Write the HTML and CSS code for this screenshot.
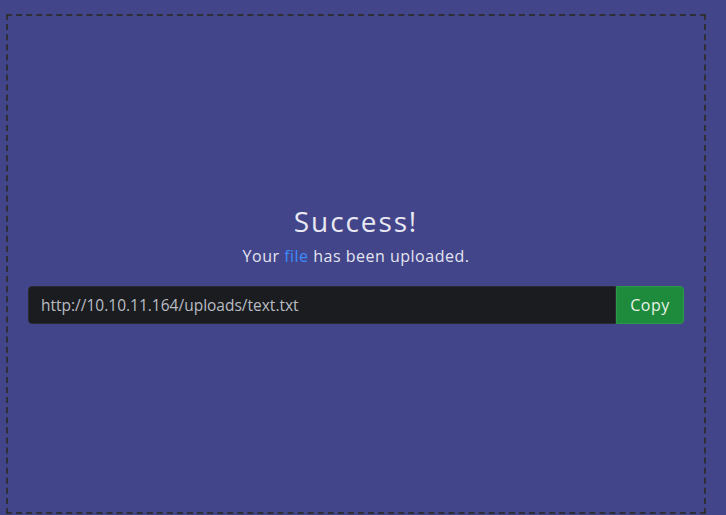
FILE: index.html
```html
<!DOCTYPE html>
<html lang="en">
<head>
<meta charset="utf-8">
<title>Upload</title>
<link rel="stylesheet" href="styles.css">
</head>
<body>
<div class="dropzone">
  <div class="result">
    <h1 class="title">Success!</h1>
    <p class="message">Your <a class="link" href="#">file</a> has been uploaded.</p>
    <div class="copy-group">
      <input class="url" type="text" value="http://10.10.11.164/uploads/text.txt" readonly>
      <button class="copy-btn" type="button">Copy</button>
    </div>
  </div>
</div>
</body>
</html>
```

FILE: styles.css
```css
html, body {
  background: #424589;
}
body {
  margin: 14px 20px 0 6px;
  font-family: "Open Sans", "Liberation Sans", sans-serif;
  color: #e4e4f0;
}
.dropzone {
  box-sizing: border-box;
  width: 700px;
  height: 500px;
  border: 2px dashed #2f2f38;
  padding: 0 20px;
  display: flex;
  align-items: center;
}
.result {
  width: 100%;
  display: flex;
  flex-direction: column;
  align-items: center;
  margin-top: 0;
}
.title {
  margin: 0;
  font-size: 28px;
  font-weight: 400;
  line-height: 32px;
  letter-spacing: 1.9px;
  color: #e8e8f2;
}
.message {
  margin: 8px 0 0;
  font-size: 16px;
  line-height: 22px;
  letter-spacing: 0.5px;
  color: #e4e4f0;
}
.link {
  color: #3d8bfd;
  text-decoration: none;
}
.copy-group {
  display: flex;
  width: 100%;
  margin-top: 19px;
}
.url {
  flex: 1;
  box-sizing: border-box;
  height: 38px;
  margin: 0;
  padding: 0 12px;
  background: #1b1c1f;
  border: 1px solid #2a2b30;
  border-radius: 4px 0 0 4px;
  color: #b8bcc4;
  font-family: inherit;
  font-size: 15.5px;
  outline: none;
}
.copy-btn {
  box-sizing: border-box;
  width: 68px;
  height: 38px;
  margin: 0;
  padding: 0;
  background: #1e8a3b;
  border: 1px solid #2a9a4a;
  border-radius: 0 4px 4px 0;
  color: #eaf2ea;
  font-family: inherit;
  font-size: 16px;
  letter-spacing: 0.5px;
}
```
